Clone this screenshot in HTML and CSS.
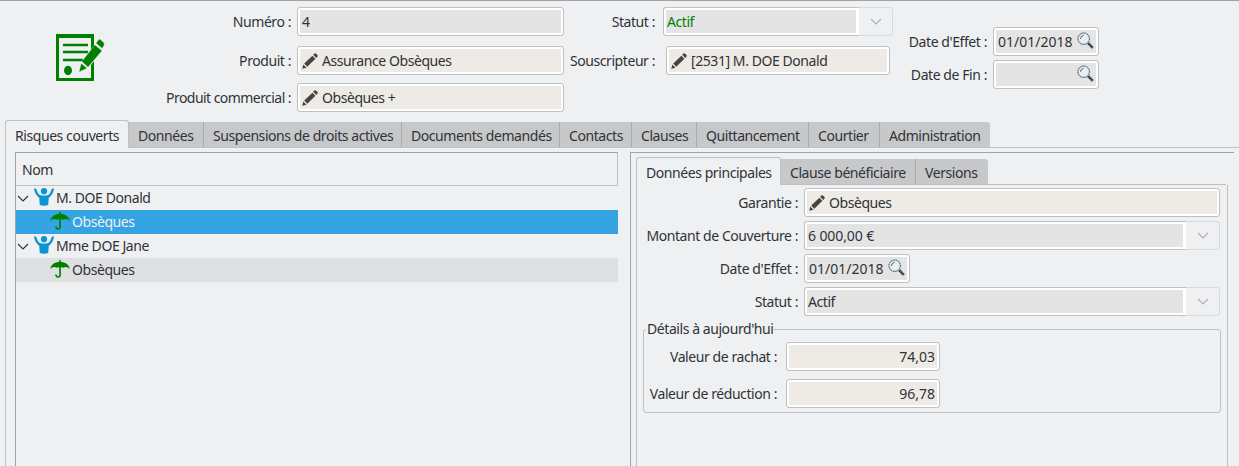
FILE: index.html
```
<!DOCTYPE html>
<html lang="fr">
<head>
<meta charset="utf-8">
<title>Contrat</title>
<link rel="stylesheet" href="styles.css">
</head>
<body>
<svg class="defs" width="0" height="0">
  <symbol id="pencil" viewBox="0 0 16 16"><path d="M0.3 15.8 1.3 11.6 4.5 14.8Z M2.2 10.6 10.4 2.8 13.4 5.8 5.3 13.7Z M11.2 1.8 12.3.6Q13.2-.1 14.4.9L15.3 1.8Q16.1 2.8 15.4 3.8L14.3 4.9Z" fill="#45453f"/></symbol>
  <symbol id="loupe" viewBox="0 0 17 17"><path d="M11 11 16 16" stroke="#999" stroke-width="3"/><path d="M11.2 11.2 15.8 15.8" stroke="#222" stroke-width="2" stroke-dasharray="1.5 .6"/><circle cx="6.7" cy="6.7" r="5.6" fill="#ebedee" stroke="#b4c3cb" stroke-width="1.4"/><circle cx="6.7" cy="6.7" r="5.8" fill="none" stroke="#28637f" stroke-width="1" stroke-dasharray="1.3 1"/><path d="M3.4 6.8Q3.7 4 6.6 3.1" fill="none" stroke="#555" stroke-width="1"/></symbol>
  <symbol id="chev" viewBox="0 0 12 7"><path d="M1 1 6 6 11 1" fill="none" stroke="currentColor" stroke-width="1.1"/></symbol>
  <symbol id="person" viewBox="0 0 20 18"><circle cx="10" cy="3.2" r="3.1"/><path d="M0 .5H2L3.9 5Q5 7.2 7.5 7.4H12.5Q15 7.2 16.1 5L18 .5H20Q19.5 6 14.8 9.8L14.2 17Q10 18.5 5.8 17L5.2 9.8Q.5 6 0 .5Z"/></symbol>
  <symbol id="umbrella" viewBox="0 0 20 18"><path d="M0 8.8Q2 2.3 9.2 1.8V0H10.7V1.8Q18 2.3 20 8.8Q16.5 6 13.3 7.7Q12 7 10.9 7.4V15Q10.8 17.8 8 17.8Q5.2 17.6 5.1 14.6H6.7Q6.9 16.3 8 16.3Q9.2 16.2 9.2 15V7.4Q8 7 6.7 7.7Q3.5 6 0 8.8Z"/></symbol>
</svg>
<div class="app">
  <header class="head">
    <div class="logo"><svg width="49" height="48" viewBox="0 0 49 48"><path d="M0 0H38V13L35 16V4H3V44H35V31L38 27V47H0Z" fill="#008000"/><path d="M7 11H32M7 18H32M7 26H27" stroke="#008000" stroke-width="2.4"/><ellipse cx="12" cy="36.5" rx="4" ry="4.7" fill="#008000"/><path d="M23 38 25.2 29.2 31 34.2Z M25.8 27.5 38.8 10.8 46 16.8 32 33.2Z M40 9.2 42 6.2Q43.6 4.5 45.3 6.2L47.7 8.6Q49 10.6 47.4 12.6L46.2 14.5Z" fill="#008000" stroke="#eff0f1" stroke-width=".4"/></svg></div>
    <div class="labels l1"><label>Numéro :</label><label>Produit :</label><label class="r3 tight">Produit commercial :</label></div>
    <div class="fields f1">
      <div class="field"><span>4</span></div>
      <div class="field warm"><svg class="pen"><use href="#pencil"/></svg><span>Assurance Obsèques</span></div>
      <div class="field warm r3"><svg class="pen"><use href="#pencil"/></svg><span>Obsèques +</span></div>
    </div>
    <div class="labels l2"><label>Statut :</label><label>Souscripteur :</label></div>
    <div class="fields f2">
      <div class="combo"><div class="field green"><span>Actif</span></div><div class="drop"><svg><use href="#chev"/></svg></div></div>
      <div class="field warm subscriber"><svg class="pen"><use href="#pencil"/></svg><span>[2531] M. DOE Donald</span></div>
    </div>
    <div class="labels l3"><label>Date d'Effet :</label><label>Date de Fin :</label></div>
    <div class="fields f3">
      <div class="field date"><span>01/01/2018</span><svg class="loupe"><use href="#loupe"/></svg></div>
      <div class="field date"><svg class="loupe"><use href="#loupe"/></svg></div>
    </div>
  </header>
  <nav class="tabs main">
    <div class="tab on">Risques couverts</div><div class="tab">Données</div><div class="tab">Suspensions de droits actives</div><div class="tab">Documents demandés</div><div class="tab">Contacts</div><div class="tab">Clauses</div><div class="tab">Quittancement</div><div class="tab">Courtier</div><div class="tab">Administration</div>
  </nav>
  <main class="page">
    <section class="tree">
      <div class="col">Nom</div>
      <div class="row"><svg class="exp"><use href="#chev"/></svg><svg class="ico blue"><use href="#person"/></svg><span>M. DOE Donald</span></div>
      <div class="row child sel"><svg class="ico grn"><use href="#umbrella"/></svg><span>Obsèques</span></div>
      <div class="row"><svg class="exp"><use href="#chev"/></svg><svg class="ico blue"><use href="#person"/></svg><span>Mme DOE Jane</span></div>
      <div class="row child alt"><svg class="ico grn"><use href="#umbrella"/></svg><span>Obsèques</span></div>
    </section>
    <section class="detail">
      <nav class="tabs sub"><div class="tab on">Données principales</div><div class="tab">Clause bénéficiaire</div><div class="tab">Versions</div></nav>
      <div class="body">
        <div class="form">
          <label>Garantie :</label><div class="field warm"><svg class="pen"><use href="#pencil"/></svg><span>Obsèques</span></div>
          <label>Montant de Couverture :</label><div class="combo"><div class="field amount"><span>6 000,00 €</span></div><div class="drop"><svg><use href="#chev"/></svg></div></div>
          <label>Date d'Effet :</label><div class="field date"><span>01/01/2018</span><svg class="loupe"><use href="#loupe"/></svg></div>
          <label>Statut :</label><div class="combo"><div class="field"><span>Actif</span></div><div class="drop"><svg><use href="#chev"/></svg></div></div>
        </div>
        <fieldset class="group">
          <legend>Détails à aujourd'hui</legend>
          <div class="values"><label>Valeur de rachat :</label><div class="field warm num">74,03</div><label>Valeur de réduction :</label><div class="field warm num">96,78</div></div>
        </fieldset>
      </div>
    </section>
  </main>
</div>
</body>
</html>
```
FILE: styles.css
```
* { box-sizing: border-box; }
body { margin: 0; background: #eff0f1; color: #2f3336; font: 14px/20px "Noto Sans", sans-serif; letter-spacing: -.43px; overflow: hidden; }
.defs { position: absolute; }
.app { width: 1239px; height: 466px; display: flex; flex-direction: column; border-top: 1px solid #a2a3a9; }
label, span, .tab { white-space: nowrap; }
svg { display: block; flex: none; }

.head { height: 119px; display: flex; padding-top: 6px; }
.logo { width: 105px; padding: 27px 0 0 56px; }
.labels, .fields { display: flex; flex-direction: column; gap: 10px; }
.labels label { height: 29px; line-height: 29px; text-align: right; }
.r3 { margin-top: -2px; }
.tight { letter-spacing: -.55px; }
.l1 { width: 186px; margin-right: 6px; }
.f1 { width: 267px; }
.l2 { width: 91px; margin-right: 8px; }
.f2 { width: 230px; }
.l3 { width: 94px; margin-right: 6px; }
.f3 { width: 106px; }
.l3, .f3 { padding-top: 20px; gap: 4px; }
.subscriber { margin: 0 3px; }

.field { height: 29px; border: 1px solid #bec1c4; border-radius: 3px; background: #e4e4e4; box-shadow: inset 0 0 0 2px #fff; display: flex; align-items: center; padding: 0 4px; line-height: 27px; }
.warm { background: #eeeae5; }
.green { color: #008000; }
.pen { width: 16px; height: 16px; margin-right: 4px; }
.date { width: 106px; padding: 0 4px; letter-spacing: 0; }
.amount { letter-spacing: -.1px; }
.loupe { width: 17px; height: 17px; margin: 0 0 2px auto; }
.combo { display: flex; height: 29px; }
.combo .field { flex: 1; border-right: 0; border-radius: 3px 0 0 3px; padding: 0 3px; box-shadow: inset 0 2px #fff, inset 0 -2px #fff, inset 2px 0 #fff, inset -3px 0 #fff; }
.drop { width: 34px; border: 1px solid #d9dbdc; border-left: 0; border-radius: 0 3px 3px 0; color: #adafb1; display: flex; align-items: center; justify-content: center; }
.drop svg { width: 12px; height: 7px; }

.tabs { display: flex; align-items: flex-end; height: 28px; position: relative; }
.tabs::after { content: ""; position: absolute; bottom: 0; right: 0; height: 1px; background: #bec0c2; }
.main { padding-left: 5px; }
.main::after { left: 129px; }
.tab { height: 26px; line-height: 28px; background: #c7c8ca; border-right: 1px solid #a9abad; padding: 0 9px; }
.tab:last-child { border-right: 0; border-radius: 0 3px 0 0; }
.tab.on { height: 28px; line-height: 29px; background: #eff0f1; border: 1px solid #bec0c2; border-bottom: 0; border-radius: 3px 3px 0 0; }
.main .tab:nth-child(1) { width: 124px; }
.main .tab:nth-child(2) { width: 75px; }
.main .tab:nth-child(3) { width: 198px; }
.main .tab:nth-child(4) { width: 158px; }
.main .tab:nth-child(5) { width: 72px; }
.main .tab:nth-child(6) { width: 65px; }
.main .tab:nth-child(7) { width: 112px; }
.main .tab:nth-child(8) { width: 71px; }
.main .tab:nth-child(9) { width: 110px; }

.page { flex: 1; margin-left: 5px; border-left: 1px solid #bec0c2; padding: 4px 5px 0 9px; display: flex; gap: 12px; }
.tree { width: 603px; border-top: 1px solid #a2a3a9; border-left: 1px solid #a2a3a9; }
.col { height: 33px; line-height: 34px; padding-left: 6px; border-right: 1px solid #bec0c2; border-bottom: 1px solid #bec0c2; }
.row { height: 24px; display: flex; align-items: center; padding-left: 1px; }
.exp { width: 12px; height: 7px; margin-right: 5px; }
.ico { width: 20px; height: 18px; margin: 0 2px 3px 0; }
.blue { fill: #0a94d6; }
.grn { fill: #008000; }
.child { padding-left: 34px; }
.sel { background: #34a4e3; color: #eff0f1; }
.alt { background: #dedfe0; }

.detail { flex: 1; border-top: 1px solid #a2a3a9; border-left: 1px solid #a2a3a9; padding: 4px 6px 0 5px; display: flex; flex-direction: column; }
.sub::after { left: 145px; right: 2px; }
.sub .tab:nth-child(1) { width: 145px; }
.sub .tab:nth-child(2) { width: 135px; }
.sub .tab:nth-child(3) { width: 72px; }
.body { flex: 1; border: 1px solid #bec0c2; border-width: 0 1px 0 1px; padding: 3px 7px 0 6px; }
.form { display: grid; grid-template-columns: 155px 416px; column-gap: 6px; row-gap: 4px; }
.form label, .values label { text-align: right; line-height: 29px; }
.group { margin: 3px -1px 0 0; padding: 0; height: 94px; border: 1px solid #bec1c4; border-radius: 3px; }
legend { margin-left: 2px; padding: 0 1px; height: 20px; line-height: 20px; }
.values { display: grid; grid-template-columns: 133px 154px; column-gap: 9px; row-gap: 8px; padding-top: 3px; }
.num { justify-content: flex-end; letter-spacing: 0; }
```
